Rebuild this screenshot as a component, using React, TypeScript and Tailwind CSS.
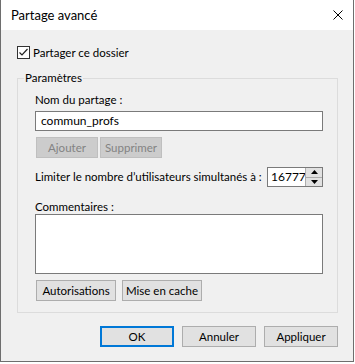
import React from "react";

const font = { fontFamily: 'Lato, "Segoe UI", Arial, sans-serif' };

function WinButton({
  label,
  width,
  disabled,
  primary,
}: {
  label: string;
  width: string;
  disabled?: boolean;
  primary?: boolean;
}) {
  return (
    <button
      className={
        width +
        " h-[21px] text-[11.5px] leading-none whitespace-nowrap " +
        (disabled
          ? "bg-[#cccccc] border border-[#bfbfbf] text-[#838383]"
          : primary
          ? "bg-[#e1e1e1] border-2 border-[#0078d7] text-black"
          : "bg-[#e1e1e1] border border-[#adadad] text-black")
      }
    >
      {label}
    </button>
  );
}

function Spinner() {
  return (
    <div className="flex w-[56px] h-[20px] border border-[#7a7a7a] bg-white">
      <div className="flex-1 overflow-hidden pl-[3px] text-[12px] leading-[18px] text-black whitespace-nowrap">
        16777
      </div>
      <div className="flex flex-col w-[17px] border-l border-[#adadad]">
        <div className="flex-1 flex items-center justify-center bg-[#e1e1e1] border-b border-[#adadad]">
          <svg width="7" height="4" viewBox="0 0 7 4">
            <path d="M0 4 L3.5 0 L7 4 Z" fill="#000" />
          </svg>
        </div>
        <div className="flex-1 flex items-center justify-center bg-[#e1e1e1]">
          <svg width="7" height="4" viewBox="0 0 7 4">
            <path d="M0 0 L3.5 4 L7 0 Z" fill="#000" />
          </svg>
        </div>
      </div>
    </div>
  );
}

export default function App() {
  return (
    <div className="w-[355px] h-[364px] bg-white text-black" style={font}>
      <div className="flex flex-col w-[354px] h-[362px] border-x border-b border-[#6e6e6e]">
        {/* title bar */}
        <div className="flex items-center justify-between h-[30px] bg-white pl-[10px] pr-[10px]">
          <span className="text-[13px] leading-none">Partage avancé</span>
          <svg width="10" height="10" viewBox="0 0 10 10">
            <path d="M0.5 0.5 L9.5 9.5 M9.5 0.5 L0.5 9.5" stroke="#000" strokeWidth="1" />
          </svg>
        </div>

        <div className="flex-1 flex flex-col bg-[#f0f0f0] pl-[16px] pr-[15px] text-[11.5px]">
          <label className="flex items-center mt-[16px] h-[13px] leading-none whitespace-nowrap">
            <span className="flex items-center justify-center w-[13px] h-[13px] border border-[#333333] bg-white">
              <svg width="11" height="11" viewBox="0 0 11 11">
                <path d="M1.5 5.5 L4 8 L9.5 2" fill="none" stroke="#222" strokeWidth="1.2" />
              </svg>
            </span>
            <span className="ml-[3px]">Partager ce dossier</span>
          </label>

          <fieldset className="min-w-0 mt-[11px] border border-[#dcdcdc] pl-[17px] pr-[14px] pb-[11px]">
            <legend className="-ml-[11px] px-[1px] leading-[16px]">Paramètres</legend>

            <div className="mt-[6px] leading-[16px]">Nom du partage :</div>
            <div className="mt-[3px] h-[20px] border border-[#7a7a7a] bg-white pl-[5px] text-[12px] leading-[18px]">
              commun_profs
            </div>

            <div className="flex gap-[2px] mt-[6px] pl-[1px]">
              <WinButton label="Ajouter" width="w-[62px]" disabled />
              <WinButton label="Supprimer" width="w-[62px]" disabled />
            </div>

            <div className="flex items-center justify-between mt-[9px]">
              <span className="leading-[16px] whitespace-nowrap">
                Limiter le nombre d’utilisateurs simultanés à :
              </span>
              <Spinner />
            </div>

            <div className="mt-[13px] leading-[14px]">Commentaires :</div>
            <div className="h-[60px] border border-[#7a7a7a] bg-white" />

            <div className="flex gap-[6px] mt-[6px] pl-[1px]">
              <WinButton label="Autorisations" width="w-[80px]" />
              <WinButton label="Mise en cache" width="w-[80px]" />
            </div>
          </fieldset>

          <div className="flex justify-end gap-[8px] mt-[13px]">
            <WinButton label="OK" width="w-[74px]" primary />
            <WinButton label="Annuler" width="w-[74px]" />
            <WinButton label="Appliquer" width="w-[74px]" />
          </div>
        </div>
      </div>
    </div>
  );
}
